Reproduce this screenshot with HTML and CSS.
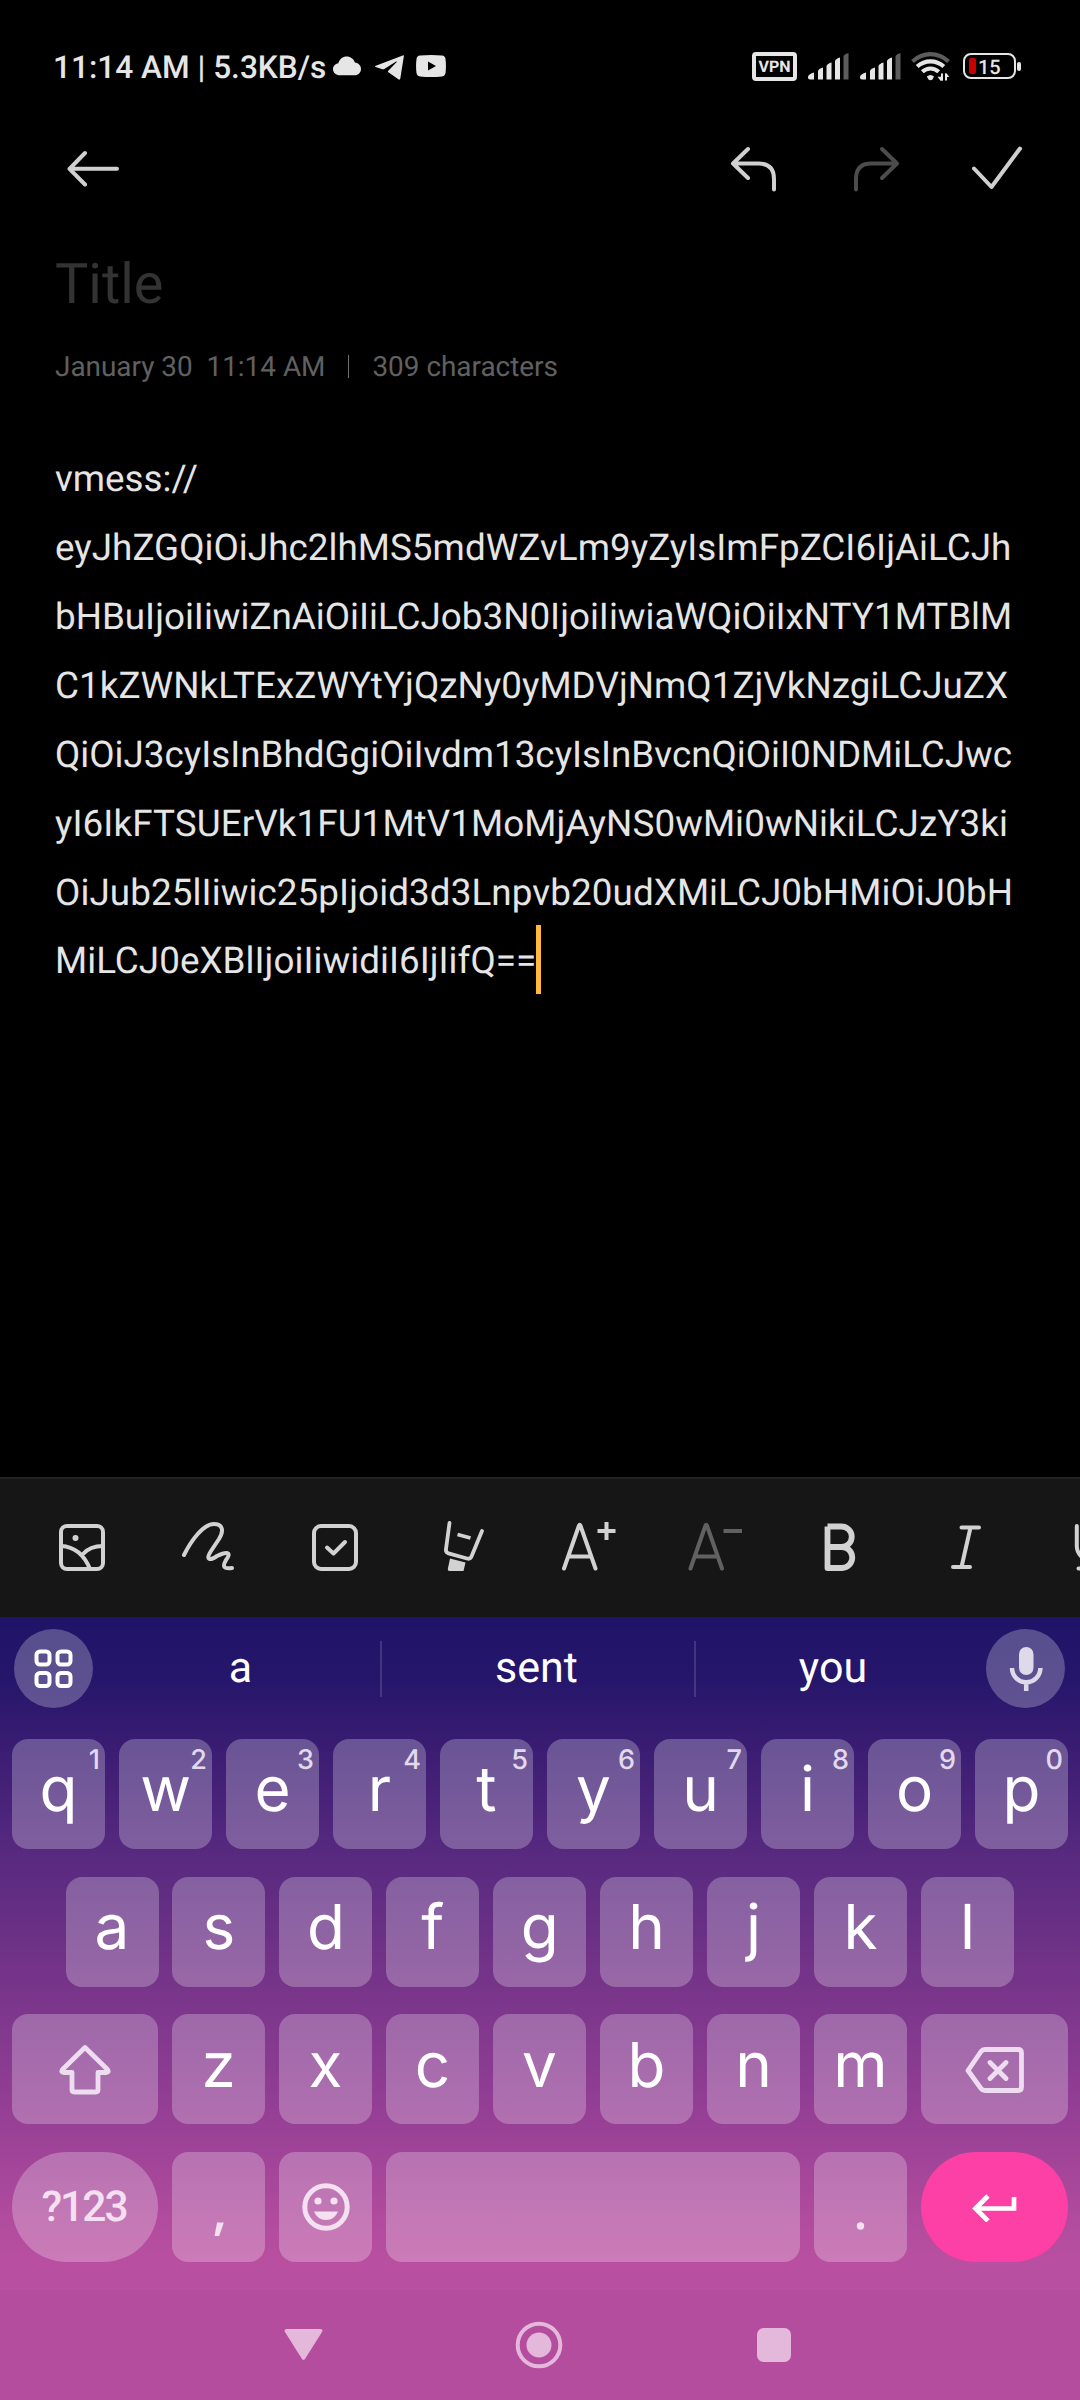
FILE: index.html
```html
<!DOCTYPE html>
<html lang="en">
<head>
<meta charset="utf-8">
<title>Note</title>
<link rel="stylesheet" href="styles.css">
</head>
<body>
<div class="screen">
  <header class="status">
    <span class="status-text">11:14 AM | 5.3KB/s</span>
    <svg class="cloud" width="28" height="20" viewBox="0 0 28 20"><path fill="#e6e6e6" d="M7 19.200C3 19.200 0 16.600 0 13.200 0 10 2.400 7.600 5.300 7.200 6.500 3.300 9.800.6 13.700.6c3.900 0 7 2.400 8.200 5.900C25.500 7 28 9.600 28 12.900c0 3.500-2.800 6.300-6.300 6.300z"/></svg>
    <svg class="plane" width="29" height="25" viewBox="0 0 29 25"><path fill="#e6e6e6" d="M28.400.3C28.800.2 29 .5 28.900 1L25.300 23.600C25.100 24.800 24.200 25 23.300 24.300L13.400 17.200C12.800 16.700 12.800 16.200 13.300 15.700L21.500 7.200C22 6.700 21.400 6.300 20.700 6.800L9.300 14C8.700 14.400 8.100 14.400 7.400 14.200L.7 12.100C-.2 11.800-.2 11.100.8 10.700z"/></svg>
    <svg class="tube" width="30" height="22" viewBox="0 0 30 22"><path fill="#e6e6e6" fill-rule="evenodd" d="M4 .6Q15-.4 26 .6 29 .9 29.500 4 30.400 11 29.500 18 29 21.100 26 21.400 15 22.400 4 21.400 1 21.100.5 18-.4 11 .5 4 1 .9 4 .6zM12 6.500v9l8-4.500z"/></svg>
    <span class="grow"></span>
    <span class="vpn">VPN</span>
    <svg class="signal" width="41" height="27" viewBox="0 0 41 27"><g fill="#e6e6e6"><path d="M0 23.500Q1 21 6 19.500V26.500H2Q0 26.500 0 24.500z"/><path d="M10 17.500Q11 15.500 15 14.500V26.500H10z"/><path d="M18.500 13Q19.500 10.500 23.500 9.500V26.500H18.500z"/><path d="M27 8Q28 5.500 32 4.500V26.500H27z"/></g><path fill="#5c5c5c" d="M35.500 3Q36.500.8 40.500 0V26.500H35.500z"/></svg>
    <svg class="signal" width="41" height="27" viewBox="0 0 41 27"><g fill="#e6e6e6"><path d="M0 23.500Q1 21 6 19.500V26.500H2Q0 26.500 0 24.500z"/><path d="M10 17.500Q11 15.500 15 14.500V26.500H10z"/><path d="M18.500 13Q19.500 10.500 23.500 9.500V26.500H18.500z"/><path d="M27 8Q28 5.500 32 4.500V26.500H27z"/></g><path fill="#5c5c5c" d="M35.500 3Q36.500.8 40.500 0V26.500H35.500z"/></svg>
    <svg class="wifi" width="39" height="29" viewBox="0 0 39 29"><g fill="none" stroke-width="4.200"><path stroke="#5c5c5c" d="M1.500 9.500Q9.500 2.200 19.500 2.200T37.500 9.500"/><path stroke="#e6e6e6" d="M6.200 14.500Q12 9.300 19.500 9.300T32.800 14.500"/><path stroke="#e6e6e6" d="M11.300 19.800Q15 16.500 19.500 16.500T27.700 19.800"/></g><path fill="#e6e6e6" d="M15.800 24.500Q19.500 21.500 23 24.500L21.500 27.500Q19.500 29 17.500 27.500zM30 21.500h2v7.200h-2.500L26.500 24.800H30zM34 28.500V21.300h1.500L38.300 25H36v3.500z"/></svg>
    <span class="battery"><i class="level"></i><b class="charge">15</b></span><i class="battery-tip"></i>
  </header>

  <nav class="actions">
    <svg width="54" height="44" viewBox="0 0 54 44"><path class="line" d="M18 6L2.500 21.800 18 37.500M2.500 21.800H50"/></svg>
    <span class="grow"></span>
    <svg width="50" height="46" viewBox="0 0 50 46"><path class="line" d="M20 3L5 17.500 20 32M5 17.500H31Q46 17.500 46 33V43.500"/></svg>
    <svg class="redo" width="50" height="46" viewBox="0 0 50 46"><path class="line dim" d="M31 3L46 17.500 31 32M46 17.500H20Q5 17.500 5 33V43.500"/></svg>
    <svg class="done" width="52" height="46" viewBox="0 0 52 46"><path class="line" d="M3 22.500L20.500 41 49 2.500"/></svg>
  </nav>

  <main class="note">
    <h1 class="title">Title</h1>
    <div class="meta"><span class="date">January 30&nbsp; 11:14 AM</span><i class="bar"></i><span class="count">309 characters</span></div>
    <div class="body">
      <div>vmess://</div>
      <div class="loose">eyJhZGQiOiJhc2lhMS5mdWZvLm9yZyIsImFpZCI6IjAiLCJh</div>
      <div>bHBuIjoiIiwiZnAiOiIiLCJob3N0IjoiIiwiaWQiOiIxNTY1MTBlM</div>
      <div class="loose">C1kZWNkLTExZWYtYjQzNy0yMDVjNmQ1ZjVkNzgiLCJuZX</div>
      <div>QiOiJ3cyIsInBhdGgiOiIvdm13cyIsInBvcnQiOiI0NDMiLCJwc</div>
      <div class="looser">yI6IkFTSUErVk1FU1MtV1MoMjAyNS0wMi0wNikiLCJzY3ki</div>
      <div class="looser">OiJub25lIiwic25pIjoid3d3Lnpvb20udXMiLCJ0bHMiOiJ0bH</div>
      <div class="last loose">MiLCJ0eXBlIjoiIiwidiI6IjIifQ==<i class="caret"></i></div>
    </div>
  </main>

  <div class="tools">
    <svg viewBox="0 0 60 60"><rect class="tl" x="9" y="9" width="42" height="43" rx="6"/><path class="tl" d="M9 29Q29 30 38 52M31 37Q38 29 51 29"/><circle cx="23.500" cy="21" r="3" fill="#d2d2d2"/></svg>
    <svg viewBox="0 0 60 60"><path class="tl rd" d="M5 38C12 24 24 7 35 7 44 7 45 14 40 22L32 34C26 43 31 44 38 39 48 34 53 35 47 43 43 50 45 52 53 51"/></svg>
    <svg viewBox="0 0 60 60"><rect class="tl" x="9" y="9" width="42" height="43" rx="7"/><path class="tl rd" d="M22 30.500L28.500 36.500 40 25"/></svg>
    <svg viewBox="0 0 60 60"><path class="tl rd thin" d="M17.500 6L14 32Q13.500 35.500 16.500 36.300L35 41.500Q38.500 42.500 39.700 39L50 14"/><path class="tl thin" d="M25.500 17.500L38.500 21"/><path fill="#d2d2d2" d="M18 41.500L33.500 45.500 31.500 54H17.500Q15.500 54 15.800 52z"/></svg>
    <svg viewBox="0 0 60 60"><path class="tl rd" d="M6 51.500L21 8.500Q21.700 7 22.400 8.500L37.500 51.500M11 39.500H33"/><path class="tl" d="M39.500 14H57.500M48.500 5V23"/></svg>
    <svg class="off" viewBox="0 0 60 60"><path class="tl rd" d="M5.500 51.500L20.500 8.500Q21.200 7 21.900 8.500L37 51.500M10.500 39.500H32.500"/><path class="tl" d="M38.500 14H57"/></svg>
    <svg viewBox="0 0 60 60"><path class="tl bold" d="M16.500 9.500H30.500A10 10 0 0 1 30.500 30H16.500M30.500 30A10.500 10.500 0 0 1 31 51H16.500V9.500"/></svg>
    <svg viewBox="0 0 60 60"><path class="tl rd" d="M23.500 10.500H41M15 50H32M32.500 10.500L23.500 50"/></svg>
    <svg viewBox="0 0 60 60"><path class="tl rd" d="M12.800 9V29A14 14 0 0 0 41 29V9M14.500 51.500H40"/></svg>
  </div>

  <section class="keyboard">
    <div class="suggest">
      <span class="round"><svg width="40" height="40" viewBox="0 0 40 40"><g fill="none" stroke="#fff" stroke-width="4"><rect x="2.500" y="2.500" width="13" height="13" rx="3.500"/><rect x="23.500" y="2.500" width="13" height="13" rx="3.500"/><rect x="2.500" y="24" width="13" height="13" rx="3.500"/><rect x="23.500" y="24" width="13" height="13" rx="3.500"/></g></svg></span>
      <span class="word first">a</span><i class="sep"></i><span class="word mid">sent</span><i class="sep"></i><span class="word end">you</span>
      <span class="round"><svg width="34" height="46" viewBox="0 0 34 46"><rect x="10" y="1" width="14.500" height="28" rx="7.200" fill="#dedaea"/><path fill="none" stroke="#dedaea" stroke-width="4.500" d="M3 22A14.200 14.200 0 0 0 31.400 22M17.200 35V45"/></svg></span>
    </div>

    <div class="keys">
      <div class="row">
        <span class="key">q<sup>1</sup></span><span class="key">w<sup>2</sup></span><span class="key">e<sup>3</sup></span><span class="key">r<sup>4</sup></span><span class="key">t<sup>5</sup></span><span class="key">y<sup>6</sup></span><span class="key">u<sup>7</sup></span><span class="key">i<sup>8</sup></span><span class="key">o<sup>9</sup></span><span class="key">p<sup>0</sup></span>
      </div>
      <div class="row inset">
        <span class="key">a</span><span class="key">s</span><span class="key">d</span><span class="key">f</span><span class="key">g</span><span class="key">h</span><span class="key">j</span><span class="key">k</span><span class="key">l</span>
      </div>
      <div class="row lower">
        <span class="key wide icon"><svg width="54" height="52" viewBox="0 0 54 52"><path class="kl" d="M27 4.500L4.500 26.500Q2.500 29.500 6 29.500H14V46.500Q14 49 16.500 49H37.500Q40 49 40 46.500V29.500H48Q51.500 29.500 49.500 26.500z"/></svg></span><span class="key">z</span><span class="key">x</span><span class="key">c</span><span class="key">v</span><span class="key">b</span><span class="key">n</span><span class="key">m</span><span class="key wide right icon"><svg width="60" height="48" viewBox="0 0 60 48"><path class="kl" d="M3 25.500L16 6.500Q17.500 4.500 20 4.500H53Q56.500 4.500 56.500 8V42Q56.500 45.500 53 45.500H20Q17.500 45.500 16 43.500zM25 17.500L41 33.500M41 17.500L25 33.500"/></svg></span>
      </div>
      <div class="row">
        <span class="key wide pill sym">?123</span><span class="key icon"><svg width="20" height="70" viewBox="0 0 20 70"><path fill="#f4e0f0" d="M8 50.500H14.800L10.200 64H5.500z"/></svg></span><span class="key icon"><svg width="50" height="50" viewBox="0 0 50 50"><circle cx="25" cy="25" r="21.200" fill="none" stroke="#f4e0f0" stroke-width="5"/><circle cx="17" cy="19" r="3.600" fill="#f4e0f0"/><circle cx="33" cy="19" r="3.600" fill="#f4e0f0"/><path fill="#f4e0f0" d="M13 29.500H37Q33.500 38 25 38T13 29.500z"/></svg></span><span class="key space"></span><span class="key icon"><svg width="20" height="70" viewBox="0 0 20 70"><circle cx="9.500" cy="54" r="3.700" fill="#f4e0f0"/></svg></span><span class="key wide right pill enter icon"><svg width="46" height="30" viewBox="0 0 46 30"><path fill="none" stroke="#fff" stroke-width="4.700" d="M16 4L3.500 16.500 16 29M3.500 16.500H42V5"/></svg></span>
      </div>
    </div>
  </section>

  <footer class="system">
    <svg width="41" height="34" viewBox="0 0 41 34"><path class="sys" d="M3.500 1H37.500Q40.500 1.500 39 4L22 31Q20.500 33 19 31L2 4Q.5 1.500 3.500 1z"/></svg>
    <svg class="home" width="48" height="48" viewBox="0 0 48 48"><circle cx="24" cy="24" r="21.300" fill="none" stroke="#e3b8da" stroke-width="4"/><circle class="sys" cx="24" cy="24" r="12.500"/></svg>
    <svg width="34" height="34" viewBox="0 0 34 34"><rect class="sys" width="34" height="34" rx="6.500"/></svg>
  </footer>
</div>
</body>
</html>
```
FILE: styles.css
```css
* { box-sizing: border-box; }
html, body { margin: 0; background: #000; }
body { font-family: Roboto, "Noto Sans", sans-serif; color: #e5e5e5; text-rendering: geometricPrecision; }
svg { display: block; flex: none; }
i, b, sup { font-style: normal; }
.grow { flex: 1; }

.screen { width: 1080px; height: 2400px; display: flex; flex-direction: column; overflow: hidden; background: #000; }

/* Status bar */
.status { height: 132px; display: flex; align-items: center; padding: 0 59px 0 53px; flex: none; }
.status-text { font-size: 31.600px; font-weight: 500; color: #e6e6e6; white-space: nowrap; width: 280px; line-height: 40px; margin-top: 3px; }
.plane { margin-left: 14px; margin-top: 2px; }
.tube { margin-left: 12px; }
.vpn { width: 45px; height: 29px; border: 4px solid #e6e6e6; border-radius: 4px; font-size: 16px; font-weight: 700; line-height: 22px; text-align: center; color: #e6e6e6; }
.signal { margin-left: 11px; margin-top: 1px; }
.wifi { margin-left: 10px; }
.battery { display: flex; align-items: center; width: 53px; height: 26px; margin-left: 13px; padding-left: 4px; border: 2.500px solid #e6e6e6; border-radius: 8px; }
.level { width: 7px; height: 16px; border-radius: 2px; background: #c90000; }
.charge { margin: 2px 0 0 2px; font-size: 20px; font-weight: 500; line-height: 22px; }
.battery-tip { width: 4px; height: 9px; margin-left: 1px; border-radius: 2px; background: #e6e6e6; }

/* Note actions */
.actions { height: 74px; display: flex; align-items: center; padding: 0 57px 0 67px; flex: none; }
.line { fill: none; stroke: #d0d0d0; stroke-width: 4; stroke-linecap: round; stroke-linejoin: round; }
.line.dim { stroke: #4c4c4c; }
.redo { margin-left: 73px; }
.done { margin-left: 70px; }

/* Note */
.note { flex: 1; padding: 48px 55px 0; }
.title { margin: 0; font-size: 55.900px; line-height: 60px; font-weight: 400; color: #333; }
.meta { display: flex; align-items: center; height: 36px; margin-top: 34px; font-size: 27.900px; color: #606060; white-space: nowrap; }
.bar { width: 1px; height: 23px; margin: 0 23px 0 23px; background: #707070; }
.body { margin-top: 60px; font-size: 36.800px; line-height: 69px; white-space: nowrap; }
.loose { letter-spacing: .04px; }
.looser { letter-spacing: .09px; }
.last { display: flex; align-items: center; height: 67px; line-height: 67px; }
.caret { width: 5px; height: 69px; margin-bottom: 2px; background: #ffb93c; }

/* Format tools */
.tools { height: 140px; display: flex; flex: none; align-items: center; gap: 66.500px; padding-left: 52px; border-top: 2px solid #222; background: #161616; overflow: hidden; }
.tools svg { width: 60px; height: 60px; margin-bottom: 2px; }
.tl { fill: none; stroke: #d2d2d2; stroke-width: 4; }
.rd { stroke-linecap: round; stroke-linejoin: round; }
.thin { stroke-width: 3.800; }
.bold { stroke-width: 5.800; stroke-linejoin: round; }
.off { opacity: .4; }

/* Keyboard */
.keyboard { height: 673px; flex: none; background: linear-gradient(#1f1368 0, #25166b 60px, #3b1d73 135px, #56297f 233px, #753489 360px, #923e94 485px, #b04b9d 600px, #b84fa0 640px); }
.suggest { height: 103px; display: flex; align-items: center; padding: 0 14px; }
.round { width: 79px; height: 79px; border-radius: 50%; display: flex; align-items: center; justify-content: center; background: rgba(255, 255, 255, .25); flex: none; }
.word { font-size: 43px; color: #fff; text-align: center; line-height: 51px; flex: none; }
.first { width: 287px; padding-left: 8px; }
.mid { width: 312px; padding-right: 3px; }
.end { width: 290px; padding-right: 16px; }
.sep { width: 2px; height: 56px; background: rgba(255, 255, 255, .14); flex: none; }
.keys { display: flex; flex-direction: column; gap: 27.700px; padding: 19px 12px 0; }
.row { display: flex; justify-content: space-between; height: 110px; }
.inset { padding: 0 54px 0 53.500px; }
.key { position: relative; width: 93px; border-radius: 16px; background: rgba(255, 255, 255, .25); font-family: Inter, sans-serif; font-size: 62px; font-weight: 420; line-height: 100px; text-align: center; color: #fff; }
.lower .key { line-height: 102px; }
.key sup { position: absolute; top: 7px; right: 5px; font-size: 27px; line-height: 28px; font-weight: 550; color: #e2daec; }
.row .wide { width: 146px; }
.row .right { width: 147px; }
.space { width: 414px; }
.icon { display: flex; align-items: center; justify-content: center; }
.kl { fill: none; stroke: #eedcf0; stroke-width: 4.800; stroke-linecap: round; stroke-linejoin: round; }
.row .pill { border-radius: 55px; }
.row .sym { padding-right: 2px; font-family: Roboto, sans-serif; font-weight: 500; font-size: 42.500px; letter-spacing: -2px; line-height: 111px; color: #f4e0f0; }
.enter { background: #fd40a5; }

/* System navigation */
.system { height: 110px; flex: none; display: flex; justify-content: space-between; align-items: center; padding: 0 289px 0 283px; background: #b54d9f; }
.home { margin-right: 3px; }
.sys { fill: #e3b8da; }
```
